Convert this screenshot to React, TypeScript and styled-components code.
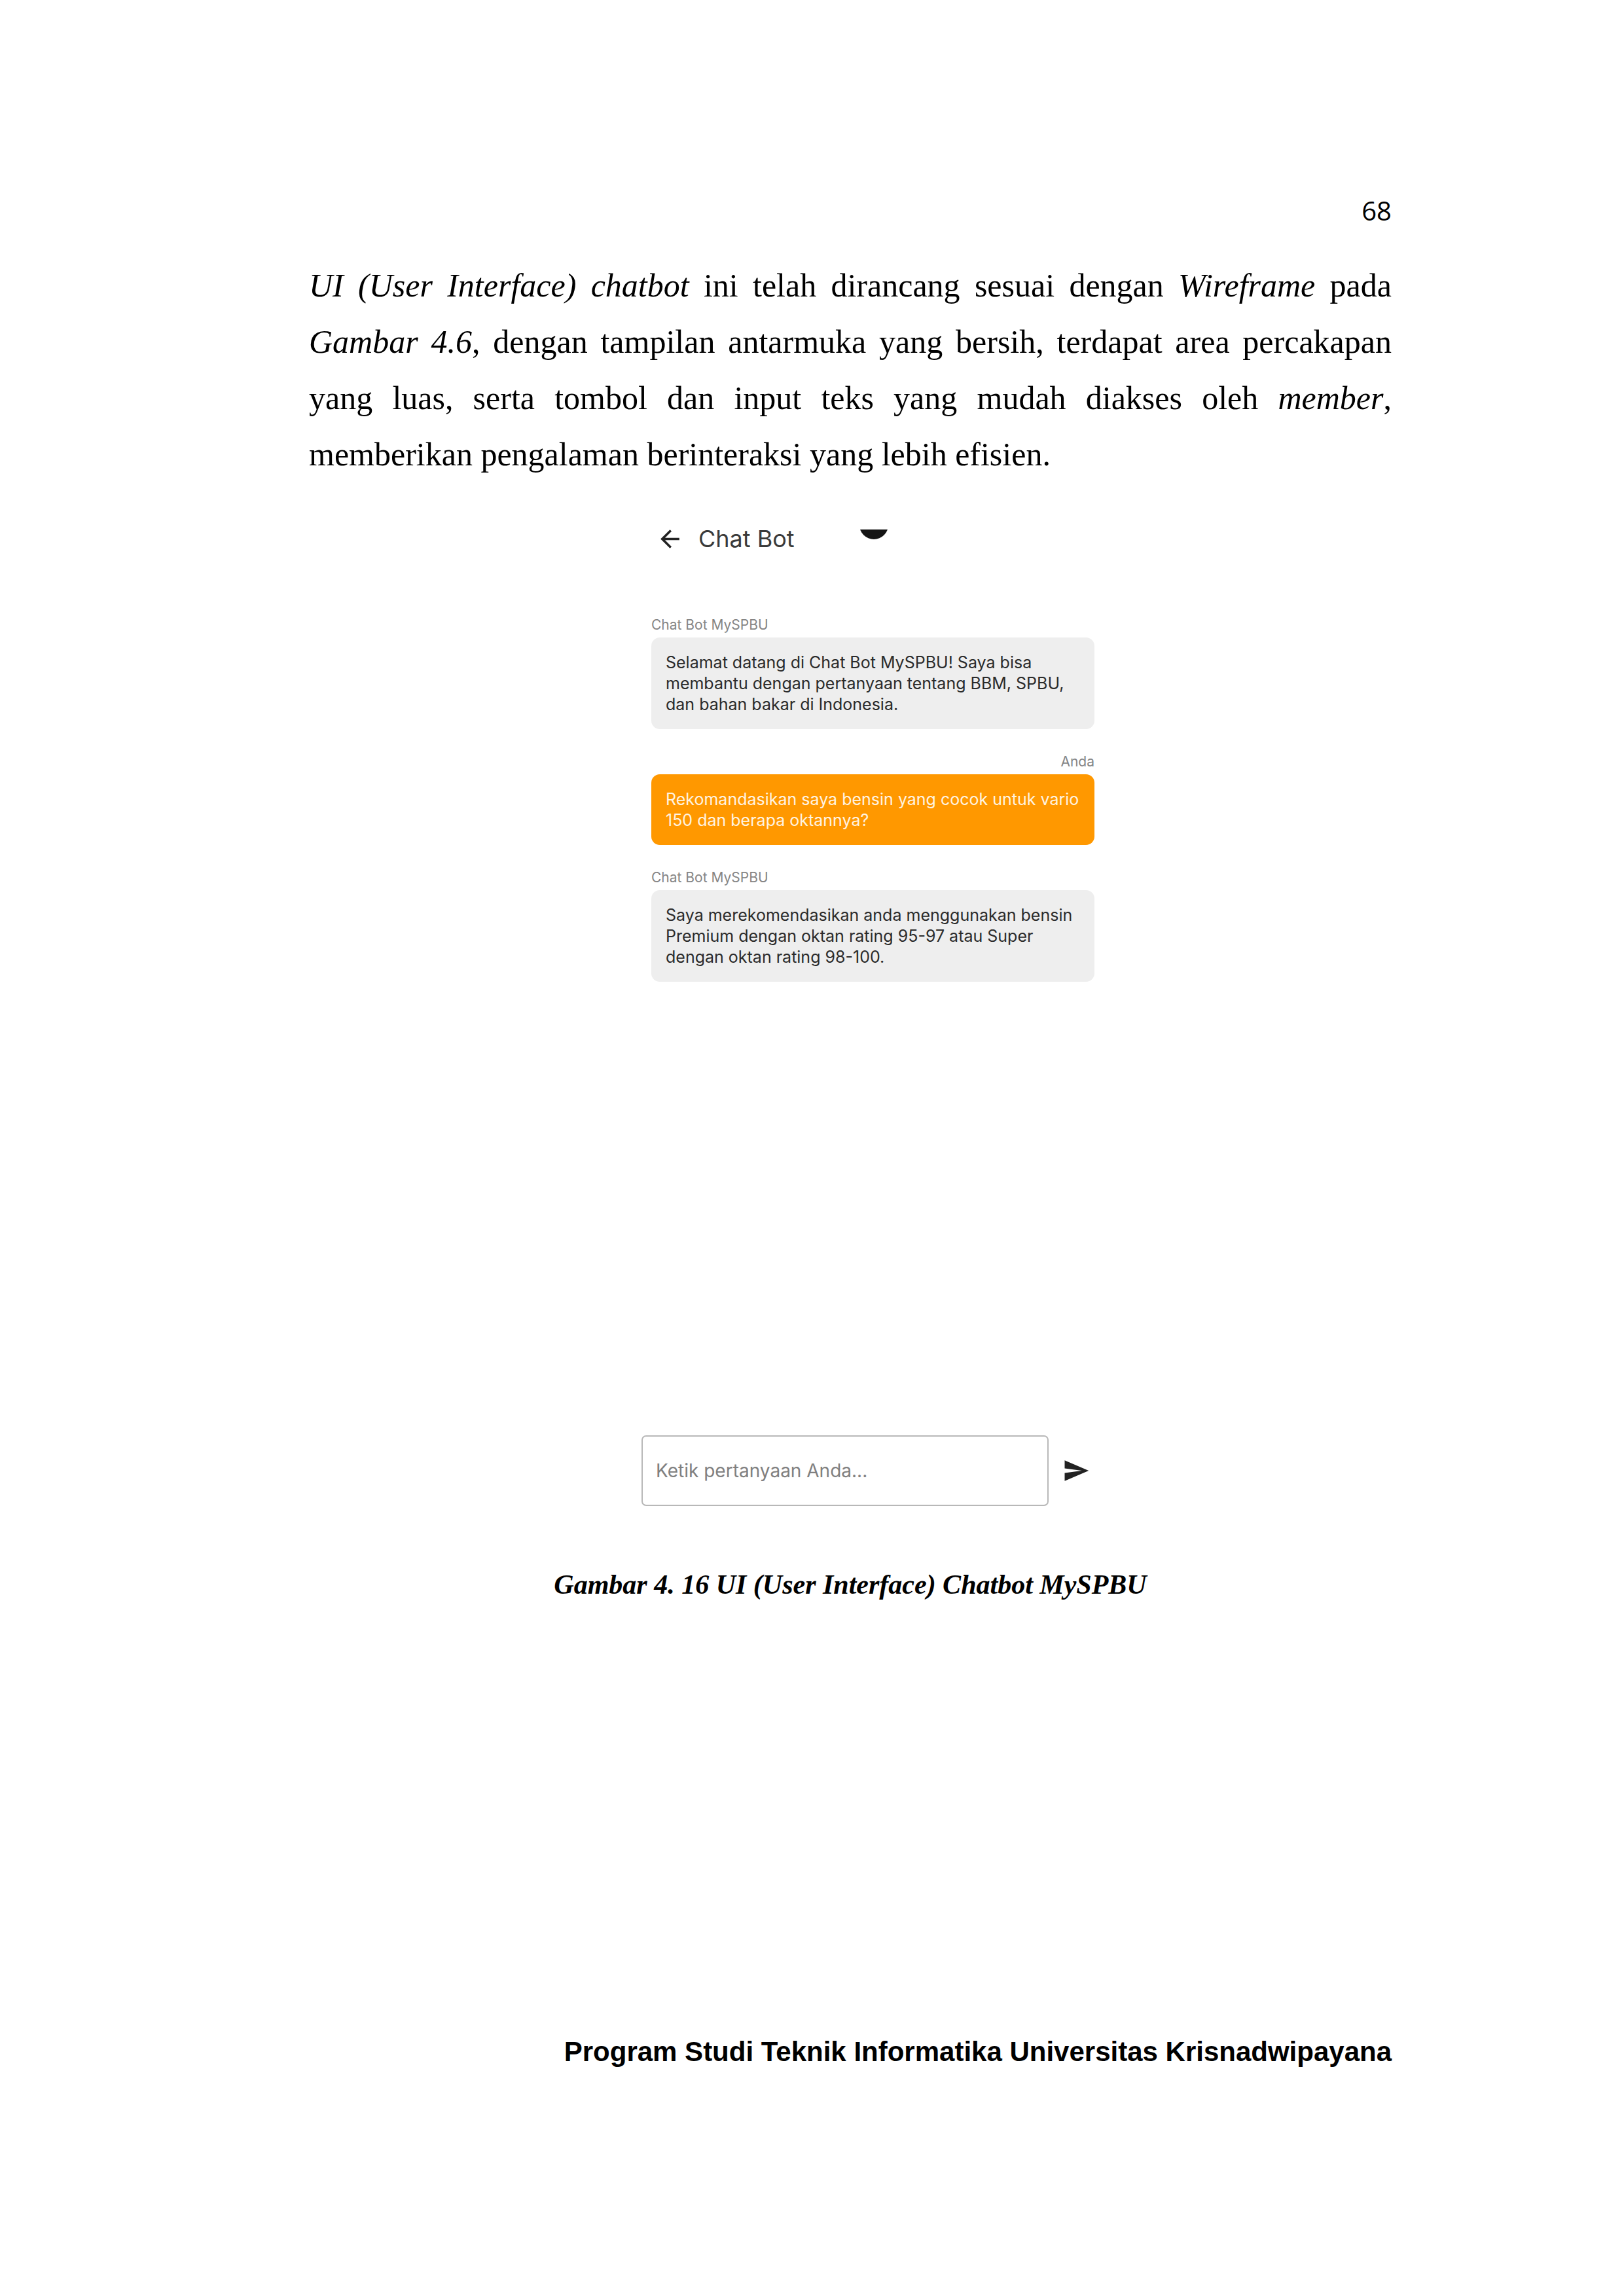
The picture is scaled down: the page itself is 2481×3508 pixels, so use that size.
import React from "react";
import styled, { createGlobalStyle } from "styled-components";

const GlobalStyle = createGlobalStyle`
  *, *::before, *::after { box-sizing: border-box; }
  body { margin: 0; background: #ffffff; color: #000000; }
`;

const uiFont = `Inter, "Open Sans", sans-serif`;

const Page = styled.div`
  display: flex;
  flex-direction: column;
  min-height: 100vh;
  padding: 294px 355px 349px 472px;
  font-family: "Liberation Serif", "Times New Roman", serif;
`;

const PageNumber = styled.header`
  margin-bottom: 43px;
  font: 400 40px/56px "Open Sans", "Noto Sans", sans-serif;
  text-align: right;
`;

const Paragraph = styled.p`
  margin: 0 0 72px;
  font-size: 50px;
  line-height: 86px;
  text-align: justify;
`;

const Figure = styled.figure`
  display: flex;
  flex-direction: column;
  align-items: center;
  gap: 90px;
  margin: 0;
`;

const PhoneArea = styled.div`
  display: flex;
  justify-content: center;
  width: 100%;
  padding-left: 72px;
`;

const Phone = styled.section`
  position: relative;
  display: flex;
  flex-direction: column;
  width: 710px;
  overflow: hidden;
  font-family: ${uiFont};
`;

const AppBar = styled.div`
  display: flex;
  align-items: center;
  gap: 22px;
  height: 28px;
  padding-left: 22px;
`;

const IconButton = styled.button`
  display: flex;
  flex: none;
  padding: 0;
  border: 0;
  background: none;
  color: #222222;
`;

const Title = styled.h1`
  margin: 0;
  color: #3a3a3a;
  font-size: 36px;
  font-weight: 400;
  line-height: 28px;
`;

const Camera = styled.svg`
  position: absolute;
  top: 0;
  left: 50%;
  margin-left: -22px;
`;

const Messages = styled.ol`
  display: flex;
  flex-direction: column;
  gap: 37px;
  min-height: 1251px;
  margin: 105px 0 0;
  padding: 0 18px 0 15px;
  list-style: none;
`;

const Message = styled.li<{ $own?: boolean }>`
  display: flex;
  flex-direction: column;
  gap: 6px;
  text-align: ${(p) => (p.$own ? "right" : "left")};
`;

const Sender = styled.span`
  color: #858585;
  font-size: 21px;
  line-height: 26px;
`;

const Bubble = styled.p<{ $own?: boolean }>`
  margin: 0;
  padding: 22px 18px 22px 22px;
  border-radius: 13px;
  background: ${(p) => (p.$own ? "#ff9800" : "#eeeeee")};
  color: ${(p) => (p.$own ? "#fff3e0" : "#2b2b2b")};
  font-size: 25px;
  line-height: 32px;
  text-align: left;
`;

const Composer = styled.form`
  display: flex;
  align-items: center;
  gap: 21px;
`;

const Question = styled.input`
  width: 622px;
  height: 108px;
  padding: 0 20px;
  border: 2px solid #b8b8b8;
  border-radius: 7px;
  background: #ffffff;
  color: #2b2b2b;
  font: 400 28px/36px ${uiFont};
  &::placeholder { color: #808080; opacity: 1; }
`;

const Caption = styled.figcaption`
  font-size: 42px;
  font-style: italic;
  font-weight: 700;
  line-height: 60px;
`;

const Footer = styled.footer`
  margin-top: auto;
  font: 700 42px/48px "Liberation Sans", Arial, sans-serif;
  text-align: right;
`;

const messages = [
  {
    sender: "Chat Bot MySPBU",
    text: "Selamat datang di Chat Bot MySPBU! Saya bisa membantu dengan pertanyaan tentang BBM, SPBU, dan bahan bakar di Indonesia.",
  },
  {
    sender: "Anda",
    own: true,
    text: "Rekomandasikan saya bensin yang cocok untuk vario 150 dan berapa oktannya?",
  },
  {
    sender: "Chat Bot MySPBU",
    text: "Saya merekomendasikan anda menggunakan bensin Premium dengan oktan rating 95-97 atau Super dengan oktan rating 98-100.",
  },
];

export default function App() {
  return (
    <>
      <GlobalStyle />
      <Page>
        <PageNumber>68</PageNumber>
        <main>
          <Paragraph>
            <em>UI (User Interface) chatbot</em> ini telah dirancang sesuai dengan{" "}
            <em>Wireframe</em> pada <em>Gambar 4.6</em>, dengan tampilan antarmuka yang
            bersih, terdapat area percakapan yang luas, serta tombol dan input teks yang
            mudah diakses oleh <em>member</em>, memberikan pengalaman berinteraksi yang
            lebih efisien.
          </Paragraph>
          <Figure>
            <PhoneArea>
              <Phone>
                <AppBar>
                  <IconButton type="button" aria-label="Kembali">
                    <svg width="43" height="43" viewBox="0 0 24 24" fill="currentColor">
                      <path d="M20 11H7.83l5.59-5.59L12 4l-8 8 8 8 1.41-1.41L7.83 13H20v-2z" />
                    </svg>
                  </IconButton>
                  <Title>Chat Bot</Title>
                </AppBar>
                <Camera width="44" height="16" viewBox="0 0 44 16" aria-hidden="true">
                  <circle cx="22" cy="-7" r="22" fill="#141414" />
                </Camera>
                <Messages>
                  {messages.map((m, i) => (
                    <Message key={i} $own={m.own}>
                      <Sender>{m.sender}</Sender>
                      <Bubble $own={m.own}>{m.text}</Bubble>
                    </Message>
                  ))}
                </Messages>
                <Composer onSubmit={(e) => e.preventDefault()}>
                  <Question
                    type="text"
                    aria-label="Ketik pertanyaan Anda"
                    placeholder="Ketik pertanyaan Anda..."
                  />
                  <IconButton type="submit" aria-label="Kirim">
                    <svg width="42" height="42" viewBox="0 0 24 24" fill="currentColor">
                      <path d="M2.01 21L23 12 2.01 3 2 10l15 2-15 2z" />
                    </svg>
                  </IconButton>
                </Composer>
              </Phone>
            </PhoneArea>
            <Caption>Gambar 4. 16 UI (User Interface) Chatbot MySPBU</Caption>
          </Figure>
        </main>
        <Footer>Program Studi Teknik Informatika Universitas Krisnadwipayana</Footer>
      </Page>
    </>
  );
}
